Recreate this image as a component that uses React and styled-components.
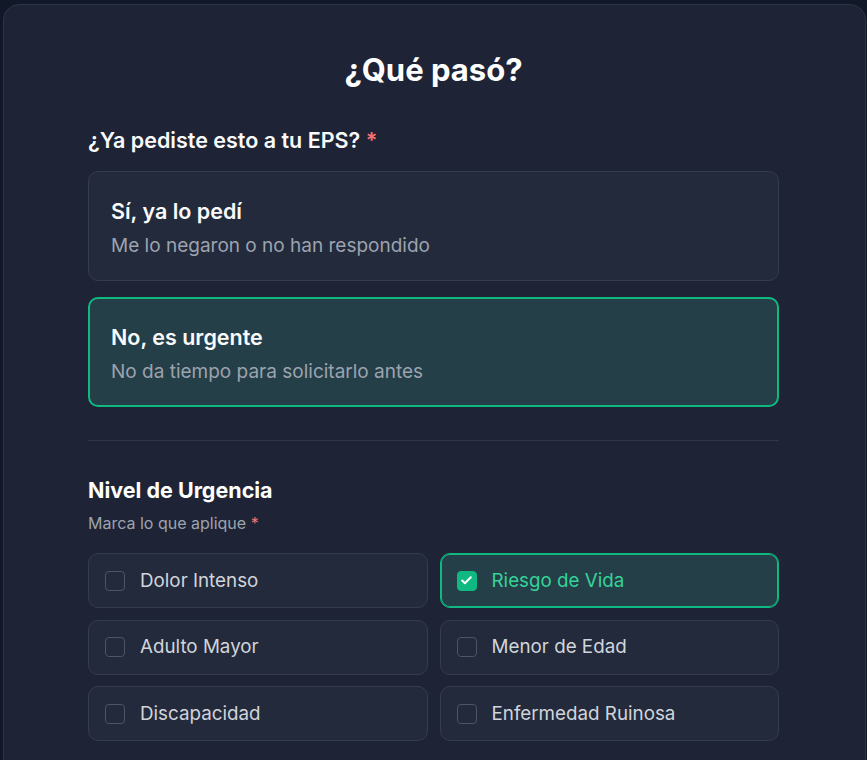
import React, { useState } from 'react'
import styled, { createGlobalStyle } from 'styled-components'
import { Check } from 'lucide-react'

const GlobalStyle = createGlobalStyle`
  html, body {
    margin: 0;
    padding: 0;
    background: #111827;
    font-family: Inter, "Noto Sans", "Liberation Sans", sans-serif;
    -webkit-font-smoothing: antialiased;
  }
  * { box-sizing: border-box; }
`

const Page = styled.div`
  padding: 4px 1px 0 3px;
  height: 760px;
  overflow: hidden;
`

const Card = styled.section`
  background: #1e2435;
  border: 1px solid #2c3445;
  border-radius: 16px;
  padding: 47px 86px 48px 84px;
  min-height: 900px;
`

const Title = styled.h1`
  margin: 0 0 38px;
  text-align: center;
  color: #ffffff;
  font-size: 31px;
  line-height: 36px;
  font-weight: 700;
`

const Question = styled.h2`
  margin: 0 0 17px;
  color: #f9fafb;
  font-size: 21.5px;
  line-height: 28px;
  font-weight: 600;
`

const Req = styled.span`
  color: #f87171;
`

const Options = styled.div`
  display: flex;
  flex-direction: column;
  gap: 16px;
`

const Option = styled.button`
  display: flex;
  flex-direction: column;
  gap: 8px;
  width: 100%;
  text-align: left;
  font-family: inherit;
  cursor: pointer;
  border-radius: 10px;
  border: ${p => (p.$active ? '2px solid #10b981' : '1px solid #343c4d')};
  background: ${p => (p.$active ? '#243f48' : '#232a3b')};
  padding: ${p => (p.$active ? '24px 21px 20px' : '25px 22px 21px')};
`

const OptionTitle = styled.span`
  color: #f9fafb;
  font-size: 21.5px;
  line-height: 28px;
  font-weight: 600;
`

const OptionText = styled.span`
  color: #9ca3af;
  font-size: 19px;
  line-height: 26px;
`

const Divider = styled.hr`
  border: none;
  border-top: 1px solid #2f3748;
  margin: 33px 0 35px;
`

const SectionTitle = styled.h3`
  margin: 0 0 9px;
  color: #ffffff;
  font-size: 21.5px;
  line-height: 28px;
  font-weight: 700;
`

const Hint = styled.p`
  margin: 0 0 20px;
  color: #9ca3af;
  font-size: 16px;
  line-height: 20px;
`

const Grid = styled.div`
  display: grid;
  grid-template-columns: 1fr 1fr;
  column-gap: 12px;
  row-gap: 11.5px;
`

const Cell = styled.label`
  display: flex;
  align-items: center;
  gap: 15px;
  height: 55px;
  padding: 0 16px;
  border-radius: 10px;
  cursor: pointer;
  border: 1px solid ${p => (p.$active ? '#10b981' : '#343c4d')};
  box-shadow: ${p => (p.$active ? 'inset 0 0 0 1px #10b981' : 'none')};
  background: ${p => (p.$active ? '#243f48' : '#232a3b')};
`

const Box = styled.span`
  display: flex;
  align-items: center;
  justify-content: center;
  width: 20px;
  height: 20px;
  flex-shrink: 0;
  border-radius: 4px;
  border: 1px solid ${p => (p.$active ? '#10b981' : '#4b5563')};
  background: ${p => (p.$active ? '#10b981' : 'transparent')};
  color: #ffffff;
`

const CellText = styled.span`
  font-size: 18.8px;
  line-height: 24px;
  color: ${p => (p.$active ? '#34d399' : '#d1d5db')};
`

const urgencias = [
  'Dolor Intenso',
  'Riesgo de Vida',
  'Adulto Mayor',
  'Menor de Edad',
  'Discapacidad',
  'Enfermedad Ruinosa',
]

export default function App() {
  const [pedido, setPedido] = useState('no')
  const [marcas, setMarcas] = useState(['Riesgo de Vida'])

  const toggle = item =>
    setMarcas(m => (m.includes(item) ? m.filter(x => x !== item) : [...m, item]))

  return (
    <Page>
      <GlobalStyle />
      <Card>
        <Title>¿Qué pasó?</Title>
        <Question>
          ¿Ya pediste esto a tu EPS? <Req>*</Req>
        </Question>
        <Options>
          <Option $active={pedido === 'si'} onClick={() => setPedido('si')}>
            <OptionTitle>Sí, ya lo pedí</OptionTitle>
            <OptionText>Me lo negaron o no han respondido</OptionText>
          </Option>
          <Option $active={pedido === 'no'} onClick={() => setPedido('no')}>
            <OptionTitle>No, es urgente</OptionTitle>
            <OptionText>No da tiempo para solicitarlo antes</OptionText>
          </Option>
        </Options>
        <Divider />
        <SectionTitle>Nivel de Urgencia</SectionTitle>
        <Hint>
          Marca lo que aplique <Req>*</Req>
        </Hint>
        <Grid>
          {urgencias.map(item => {
            const on = marcas.includes(item)
            return (
              <Cell key={item} $active={on} onClick={() => toggle(item)}>
                <Box $active={on}>{on && <Check size={13} strokeWidth={3.5} />}</Box>
                <CellText $active={on}>{item}</CellText>
              </Cell>
            )
          })}
        </Grid>
      </Card>
    </Page>
  )
}
